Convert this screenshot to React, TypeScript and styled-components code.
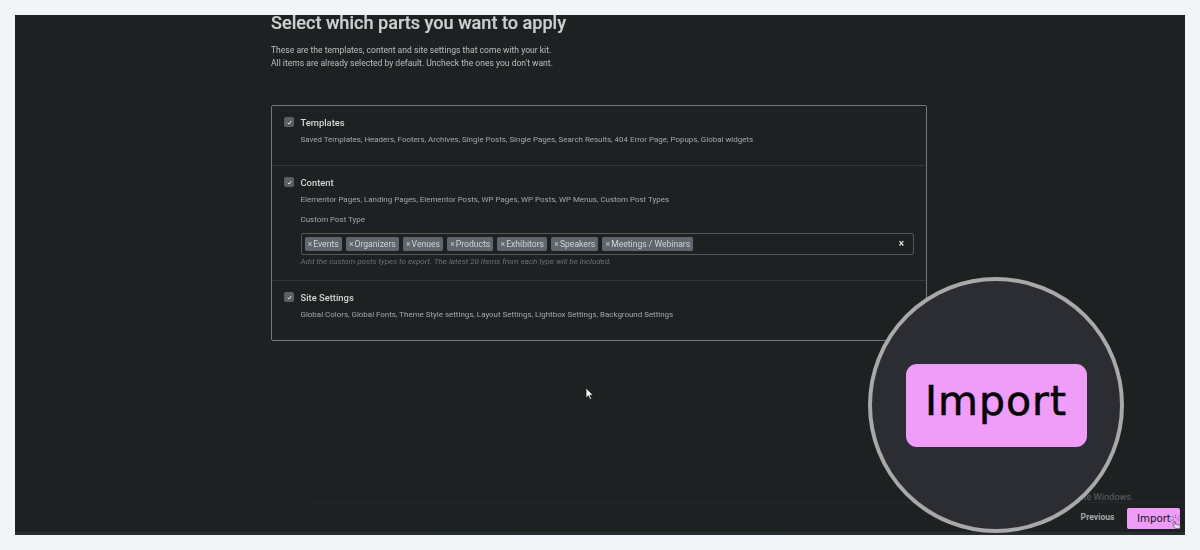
import styled, { createGlobalStyle } from 'styled-components'

const GlobalStyle = createGlobalStyle`
  html, body {
    margin: 0;
    padding: 0;
    background: #f3f4f8;
  }
  * {
    box-sizing: border-box;
  }
`

const postTypes = ['Events', 'Organizers', 'Venues', 'Products', 'Exhibitors', 'Speakers', 'Meetings / Webinars']

const Check = () => (
  <CheckBox>
    <svg width="5" height="5" viewBox="0 0 10 10">
      <path d="M1.5 5.5 L4 8 L8.5 2" fill="none" stroke="#e8e8e8" strokeWidth="2" />
    </svg>
  </CheckBox>
)

export default function App() {
  return (
    <Page>
      <GlobalStyle />
      <Frame>
        <Main>
          <Title>Select which parts you want to apply</Title>
          <Intro>
            These are the templates, content and site settings that come with your kit.
            <br />
            All items are already selected by default. Uncheck the ones you don't want.
          </Intro>
          <Panel>
            <Row $height={60}>
              <Check />
              <div>
                <RowTitle>Templates</RowTitle>
                <RowText>
                  Saved Templates, Headers, Footers, Archives, Single Posts, Single Pages, Search Results, 404 Error Page, Popups, Global widgets
                </RowText>
              </div>
            </Row>
            <Row $height={115}>
              <Check />
              <div>
                <RowTitle>Content</RowTitle>
                <RowText>Elementor Pages, Landing Pages, Elementor Posts, WP Pages, WP Posts, WP Menus, Custom Post Types</RowText>
                <FieldLabel>Custom Post Type</FieldLabel>
                <Select>
                  <Tags>
                    {postTypes.map((t) => (
                      <Tag key={t}>
                        <b>×</b>
                        {t}
                      </Tag>
                    ))}
                  </Tags>
                  <Clear>×</Clear>
                </Select>
                <Help>Add the custom posts types to export. The latest 20 items from each type will be included.</Help>
              </div>
            </Row>
            <Row $height={59}>
              <Check />
              <div>
                <RowTitle>Site Settings</RowTitle>
                <RowText>Global Colors, Global Fonts, Theme Style settings, Layout Settings, Lightbox Settings, Background Settings</RowText>
              </div>
            </Row>
          </Panel>
        </Main>
        <Footer>
          <PrevLink>Previous</PrevLink>
          <SmallImport>Import</SmallImport>
        </Footer>
        <BottomStrip />
        <Activate>Activate Windows.</Activate>
        <Pointer width="10" height="14" viewBox="0 0 10 14">
          <path d="M1 1 L1 11 L3.4 8.8 L5 12.5 L6.6 11.8 L5 8.2 L8.2 8.2 Z" fill="#f2f2f2" stroke="#111" strokeWidth="0.7" />
        </Pointer>
        <Hand width="10" height="14" viewBox="0 0 10 14">
          <g stroke="#4a404c" strokeWidth="0.8" strokeDasharray="1 0.8">
            <path d="M1 1 L3.6 3.6" />
            <path d="M4.5 0 L4.5 3" />
            <path d="M8.5 1 L5.8 3.6" />
            <path d="M0 5 L3 5" />
            <path d="M9.5 5 L6.5 5" />
            <path d="M1.2 8.5 L3 6.8" />
          </g>
          <path
            d="M3.2 7 C3.2 6.2 4.6 6.2 4.6 7 L4.6 9.2 L8 10 C9 10.3 9.4 10.8 9.2 11.6 L8.8 13.6 L4.6 13.6 L2.2 10.8 C1.8 10.1 2.6 9.6 3.2 10.1 Z"
            fill="#f0d8f4"
            stroke="#57505a"
            strokeWidth="0.7"
          />
        </Hand>
        <Lens>
          <LensButton>Import</LensButton>
        </Lens>
      </Frame>
    </Page>
  )
}

const Page = styled.div`
  width: 1200px;
  height: 550px;
  padding: 15px;
  overflow: hidden;
  background: #f3f4f8;
`

const Frame = styled.div`
  position: relative;
  width: 1170px;
  height: 520px;
  display: flex;
  flex-direction: column;
  overflow: hidden;
  background: #1e2122;
  font-family: Roboto, 'Liberation Sans', sans-serif;
`

const Main = styled.div`
  flex: 1;
  width: 656px;
  margin-left: 256px;
  filter: blur(0.35px);
`

const Title = styled.h1`
  margin: -0.5px 0 0;
  font-size: 18.1px;
  line-height: 15px;
  font-weight: 500;
  color: #cdcfd0;
  -webkit-text-stroke: 0.2px #cdcfd0;
`

const Intro = styled.p`
  margin: 14.5px 0 0;
  font-size: 8.55px;
  line-height: 13px;
  color: #bcbebf;
`

const Panel = styled.div`
  margin-top: 35px;
  border: 1px solid #74777a;
  border-radius: 2px;
`

const Row = styled.div<{ $height: number }>`
  height: ${({ $height }) => $height}px;
  display: grid;
  grid-template-columns: 10px 1fr;
  column-gap: 6.5px;
  padding: 10px 12px 0;
  border-bottom: 1px solid #33363a;
  &:last-child {
    border-bottom: 0;
  }
`

const CheckBox = styled.span`
  width: 10px;
  height: 10px;
  margin-top: 1px;
  border-radius: 2px;
  background: #5a5f66;
  display: flex;
  align-items: center;
  justify-content: center;
`

const RowTitle = styled.div`
  font-size: 9.4px;
  line-height: 13px;
  font-weight: 500;
  color: #d4d5d6;
`

const RowText = styled.div`
  margin-top: 5px;
  font-size: 7.95px;
  line-height: 11px;
  color: #a4a7a9;
`

const FieldLabel = styled.div`
  margin-top: 9px;
  font-size: 7.95px;
  line-height: 11px;
  color: #a4a7a9;
`

const Select = styled.div`
  margin-top: 8px;
  height: 22px;
  padding: 0 9px 1px 3px;
  border: 1px solid #54585c;
  border-radius: 2px;
  display: flex;
  align-items: center;
  justify-content: space-between;
`

const Tags = styled.div`
  display: flex;
  gap: 4px;
`

const Tag = styled.span`
  height: 14px;
  padding: 0 3.15px;
  border-radius: 2px;
  background: #5f666e;
  display: flex;
  align-items: center;
  font-size: 8.6px;
  color: #d2d4d6;
  b {
    margin-right: 1px;
    font-weight: 400;
    color: #c8cacc;
  }
`

const Clear = styled.span`
  font-size: 10px;
  font-weight: 700;
  color: #e0e0e0;
`

const Help = styled.div`
  margin-top: 1px;
  font-size: 8px;
  line-height: 11px;
  font-style: italic;
  color: #6c7073;
`

const Footer = styled.div`
  height: 30px;
  margin-left: 297px;
  padding: 5px 5px 3px 0;
  border-top: 1px solid #26292b;
  display: flex;
  align-items: center;
  justify-content: flex-end;
  gap: 12.5px;
`

const PrevLink = styled.span`
  margin-bottom: 4px;
  font-size: 8.6px;
  font-weight: 700;
  color: #a3a5a7;
`

const SmallImport = styled.span`
  width: 53px;
  height: 21px;
  padding-left: 10px;
  border-radius: 2px;
  background: #ee9cf8;
  display: flex;
  align-items: center;
  font-family: 'DejaVu Sans', sans-serif;
  font-size: 10.2px;
  color: #111;
`

const BottomStrip = styled.div`
  height: 3px;
  background: linear-gradient(90deg, #2a2d2f 0 22%, #212c31 40%, #222d33 60%, #2a2d2f 85%);
`

const Activate = styled.span`
  position: absolute;
  left: 1043px;
  top: 476px;
  font-size: 9.2px;
  color: #5d6062;
`

const Pointer = styled.svg`
  position: absolute;
  left: 570px;
  top: 372px;
`

const Hand = styled.svg`
  position: absolute;
  left: 1156px;
  top: 500px;
`

const Lens = styled.div`
  position: absolute;
  left: 853px;
  top: 262px;
  width: 256px;
  height: 256px;
  border-radius: 50%;
  border: 4px solid #a9a9a9;
  background: #2c2d33;
  display: flex;
  align-items: center;
  justify-content: center;
`

const LensButton = styled.div`
  width: 181px;
  height: 83px;
  padding-bottom: 9px;
  border-radius: 11px;
  background: #ef9df9;
  display: flex;
  align-items: center;
  justify-content: center;
  font-family: 'DejaVu Sans', sans-serif;
  font-size: 41px;
  letter-spacing: 1px;
  color: #050505;
  -webkit-text-stroke: 0.6px #050505;
`
